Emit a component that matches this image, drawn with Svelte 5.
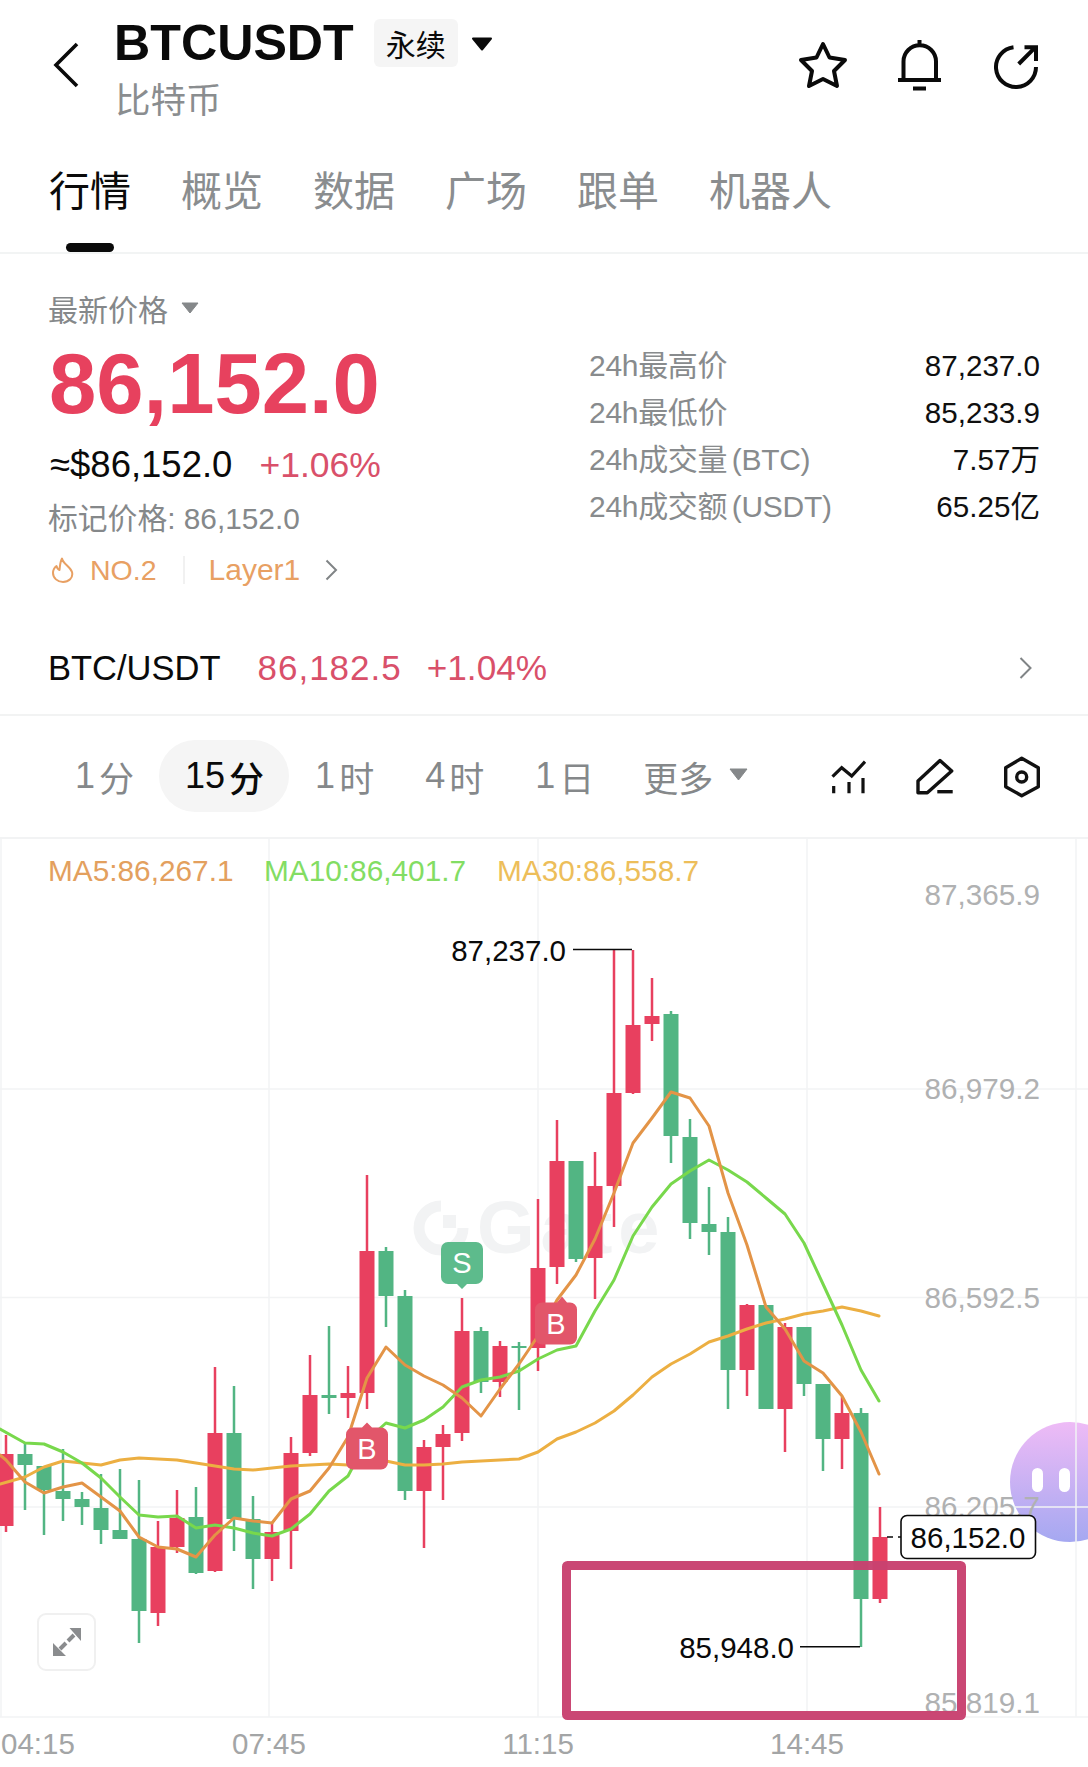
<script>
  const tabs = ["行情", "概览", "数据", "广场", "跟单", "机器人"];
  const stats = [
    ["24h最高价", "87,237.0"],
    ["24h最低价", "85,233.9"],
    ["24h成交量 (BTC)", "7.57万"],
    ["24h成交额 (USDT)", "65.25亿"],
  ];
  const intervals = [
    ["1", "分"],
    ["15", "分"],
    ["1", "时"],
    ["4", "时"],
    ["1", "日"],
  ];

  // bodyTop, bodyBottom, wickTop, wickBottom, colour; candles sit 19px apart
  const raw = [
    [1454, 1526, 1435, 1532, "r"],
    [1454, 1465, 1442, 1510, "g"],
    [1466, 1490, 1466, 1535, "g"],
    [1491, 1499, 1449, 1521, "g"],
    [1499, 1507, 1492, 1525, "g"],
    [1508, 1530, 1474, 1544, "g"],
    [1530, 1539, 1469, 1539, "g"],
    [1539, 1611, 1480, 1643, "g"],
    [1547, 1613, 1521, 1626, "r"],
    [1518, 1547, 1490, 1553, "r"],
    [1517, 1573, 1487, 1574, "g"],
    [1433, 1571, 1367, 1572, "r"],
    [1433, 1519, 1386, 1551, "g"],
    [1519, 1559, 1496, 1589, "g"],
    [1532, 1559, 1523, 1581, "r"],
    [1453, 1531, 1437, 1569, "r"],
    [1395, 1453, 1355, 1456, "r"],
    [1395, 1398, 1326, 1414, "g"],
    [1393, 1398, 1366, 1418, "r"],
    [1251, 1393, 1175, 1409, "r"],
    [1251, 1296, 1247, 1327, "g"],
    [1296, 1491, 1290, 1500, "g"],
    [1447, 1491, 1440, 1548, "r"],
    [1434, 1447, 1425, 1500, "r"],
    [1331, 1433, 1298, 1441, "r"],
    [1331, 1382, 1327, 1393, "g"],
    [1346, 1382, 1341, 1397, "r"],
    [1346, 1348, 1342, 1410, "g"],
    [1268, 1348, 1199, 1371, "r"],
    [1161, 1267, 1120, 1284, "r"],
    [1161, 1259, 1161, 1262, "g"],
    [1186, 1258, 1152, 1299, "r"],
    [1093, 1186, 950, 1227, "r"],
    [1025, 1093, 950, 1094, "r"],
    [1016, 1024, 978, 1041, "r"],
    [1014, 1136, 1011, 1163, "g"],
    [1137, 1223, 1119, 1239, "g"],
    [1224, 1232, 1187, 1255, "g"],
    [1232, 1370, 1217, 1409, "g"],
    [1305, 1370, 1304, 1396, "r"],
    [1305, 1409, 1305, 1409, "g"],
    [1327, 1409, 1323, 1452, "r"],
    [1327, 1384, 1327, 1396, "g"],
    [1384, 1439, 1384, 1471, "g"],
    [1413, 1439, 1397, 1469, "r"],
    [1413, 1599, 1408, 1647, "g"],
    [1537, 1599, 1507, 1603, "r"],
  ];
  const candles = raw.map((c, i) => ({
    x: 6 + 19 * i,
    top: c[0],
    bottom: c[1],
    high: c[2],
    low: c[3],
    color: c[4] === "r" ? "#e8405f" : "#52b583",
  }));

  const ma5 = [[0,1455],[6,1460],[25,1482],[44,1493],[63,1487],[82,1483],[101,1497],[120,1511],[139,1537],[158,1547],[177,1549],[196,1557],[215,1535],[234,1518],[253,1521],[272,1523],[291,1499],[310,1491],[329,1468],[348,1437],[367,1378],[386,1347],[405,1365],[424,1376],[443,1385],[462,1398],[481,1416],[500,1389],[519,1364],[538,1336],[557,1300],[576,1275],[595,1239],[614,1193],[633,1143],[652,1118],[671,1092],[690,1098],[709,1126],[728,1193],[747,1245],[766,1307],[785,1329],[804,1361],[823,1373],[842,1396],[861,1432],[879,1474]];
  const ma10 = [[0,1429],[25,1443],[44,1444],[63,1452],[82,1463],[101,1478],[120,1497],[139,1515],[158,1517],[177,1516],[196,1528],[215,1525],[234,1528],[253,1533],[272,1536],[291,1529],[310,1514],[329,1491],[348,1476],[367,1440],[386,1423],[405,1428],[424,1420],[443,1407],[462,1387],[481,1380],[500,1377],[519,1371],[538,1359],[557,1350],[576,1346],[595,1311],[614,1280],[633,1236],[652,1207],[671,1184],[690,1171],[709,1160],[728,1170],[747,1182],[766,1198],[785,1214],[804,1243],[823,1284],[842,1325],[861,1370],[879,1401]];
  const ma30 = [[0,1484],[25,1477],[44,1467],[63,1461],[82,1463],[101,1465],[120,1460],[139,1458],[158,1459],[177,1460],[196,1463],[215,1466],[234,1469],[253,1470],[272,1468],[291,1466],[310,1465],[329,1464],[348,1465],[367,1465],[386,1461],[405,1465],[424,1465],[443,1464],[462,1462],[481,1461],[500,1460],[519,1459],[538,1452],[557,1439],[576,1432],[595,1423],[614,1411],[633,1395],[652,1377],[671,1364],[690,1354],[709,1342],[728,1336],[747,1329],[766,1323],[785,1319],[804,1314],[823,1311],[842,1307],[861,1311],[879,1316]];
  const pts = (line) => line.map((p) => p.join(",")).join(" ");

  const gridY = [1089, 1297.5, 1507, 1717];
  const gridX = [1, 269, 538, 807, 1076];
  const yLabels = [
    ["87,365.9", 905],
    ["86,979.2", 1099],
    ["86,592.5", 1308],
    ["86,205.7", 1517],
    ["85,819.1", 1713],
  ];
  const xLabels = [
    ["07:45", 269],
    ["11:15", 538],
    ["14:45", 807],
  ];
</script>

<div class="page">
  <header class="head">
    <svg class="back" viewBox="0 0 26 46" width="26" height="46">
      <path d="M24 2 3 23l21 21" fill="none" stroke="#0a0a0a" stroke-width="3.6" />
    </svg>
    <div class="title-block">
      <div class="title-row">
        <span class="symbol">BTCUSDT</span>
        <span class="badge">永续</span>
        <svg class="title-caret" viewBox="0 0 22 14" width="22" height="14">
          <path d="M2 1.5h18L11 12.5z" fill="#0a0a0a" stroke="#0a0a0a" stroke-width="2" stroke-linejoin="round" />
        </svg>
      </div>
      <div class="coin">比特币</div>
    </div>
    <div class="head-icons">
      <svg viewBox="0 0 50 48" width="50" height="48" class="star">
        <path d="M25 3l6.5 13.5L47 19 36 30l3 15-14-7-14 7 3-15L3 19l15.500-2.500z" fill="none" stroke="#0a0a0a" stroke-width="4" stroke-linejoin="round" />
      </svg>
      <svg viewBox="0 0 43 51" width="43" height="51" class="bell">
        <g fill="none" stroke="#0a0a0a" stroke-width="4">
          <path d="M21.500 0v6M5.500 40V21.500a16.250 16.250 0 0 1 32.500 0V40M0 40h43M15 48.500h13" />
        </g>
      </svg>
      <svg viewBox="0 0 46 46" width="46" height="46" class="share">
        <g fill="none" stroke="#0a0a0a" stroke-width="4">
          <path d="M19.500 2.200A20 20 0 1 0 42 22M24.700 19 41 2.700M30.500 2.300H42V16" />
        </g>
      </svg>
    </div>
  </header>

  <nav class="tabs">
    {#each tabs as tab, i}
      <div class="tab" class:active={i === 0}>
        <span class="tab-text">{tab}</span>
        <span class="tab-bar"></span>
      </div>
    {/each}
  </nav>

  <section class="price-section">
    <div class="price-left">
      <div class="latest">
        最新价格
        <svg viewBox="0 0 18 12" width="18" height="12"><path d="M1 1h16L9 11z" fill="#85888a" stroke="#85888a" stroke-linejoin="round" /></svg>
      </div>
      <div class="big-price">86,152.0</div>
      <div class="approx">
        <span class="usd">≈$86,152.0</span>
        <span class="pct">+1.06%</span>
      </div>
      <div class="mark">标记价格: 86,152.0</div>
      <div class="rank">
        <svg viewBox="0 0 22 26" width="22" height="26">
          <path d="M10 1.500c1 5.500 8 7.500 10 13.500 1.500 6-3.500 10-9 10s-10-4-10-9c0-3 1.500-5.500 3.500-7 .5 2 1.500 3.500 3 4 .5-4 .5-8 2.500-11.500z" fill="none" stroke="#e8a063" stroke-width="2" stroke-linejoin="round" />
        </svg>
        <span class="rank-no">NO.2</span>
        <span class="rank-div"></span>
        <span class="rank-tag">Layer1</span>
        <svg viewBox="0 0 13 22" width="13" height="22">
          <path d="M1.500 1.500 11 11l-9.500 9.500" fill="none" stroke="#808486" stroke-width="2" />
        </svg>
      </div>
    </div>
    <div class="stats">
      {#each stats as row}
        <div class="stat-row">
          <span class="stat-k">{row[0]}</span>
          <span class="stat-v">{row[1]}</span>
        </div>
      {/each}
    </div>
  </section>

  <section class="spot-row">
    <span class="spot-name">BTC/USDT</span>
    <span class="spot-price">86,182.5</span>
    <span class="spot-pct">+1.04%</span>
    <svg viewBox="0 0 13 22" width="13" height="22" class="spot-more">
      <path d="M1.500 1 11.500 11l-10 10" fill="none" stroke="#808486" stroke-width="2" />
    </svg>
  </section>

  <section class="interval-row">
    {#each intervals as item, i}
      <div class="interval" class:current={i === 1}>
        <span class="interval-num">{item[0]}</span>{item[1]}
      </div>
    {/each}
    <div class="interval more">
      更多
      <svg viewBox="0 0 19 13" width="19" height="13"><path d="M1 1h17L9.500 12z" fill="#85888a" stroke="#85888a" stroke-linejoin="round" /></svg>
    </div>
    <div class="tools">
      <svg viewBox="0 0 36 36" width="36" height="36">
        <g fill="none" stroke="#111" stroke-width="3.200">
          <path d="M1.500 17.700 10.700 8.700l10 8.300L34 2.700" />
          <path d="M2.700 27v7.300M18 23v11.300M32 19v15.300" />
        </g>
      </svg>
      <svg viewBox="0 0 38 38" width="38" height="38">
        <g fill="none" stroke="#111" stroke-width="3.400" stroke-linejoin="round">
          <path d="M2 34.700V23L24 2.500 35.700 13 11.300 34.700z" />
          <path d="M21.300 33.700h15.400" />
        </g>
      </svg>
      <svg viewBox="0 0 38 42" width="38" height="42">
        <g fill="none" stroke="#111" stroke-width="3.400" stroke-linejoin="round">
          <path d="M18.700 2.300 35.300 11.700V30.700L18.700 39.700 2.700 30.700V11.700z" />
          <circle cx="18.700" cy="21" r="5" />
        </g>
      </svg>
    </div>
  </section>

  <section class="chart">
    <div class="bot">
      <span class="bot-eye"></span>
      <span class="bot-eye"></span>
    </div>
    <svg class="chart-svg" viewBox="0 839 1088 928" width="1088" height="928">
      <g stroke="#f2f3f4" stroke-width="1.500">
        {#each gridY as y}<line x1="0" x2="1088" y1={y} y2={y} />{/each}
        {#each gridX as x}<line x1={x} x2={x} y1="839" y2="1717" />{/each}
      </g>

      <g fill="#f2f3f4">
        <path d="M441 1206a22 22 0 1 0 22 22" fill="none" stroke="#f2f3f4" stroke-width="11" />
        <rect x="443" y="1215" width="13" height="13" />
        <text class="watermark" x="477" y="1253">Gate</text>
      </g>

      <text class="legend" x="48" y="881" fill="#e3a05e">MA5:86,267.1</text>
      <text class="legend" x="264" y="881" fill="#83dd63">MA10:86,401.7</text>
      <text class="legend" x="497" y="881" fill="#edbe5a">MA30:86,558.7</text>

      {#each candles as c}
        <rect x={c.x - 1.25} y={c.high} width="2.500" height={c.low - c.high} fill={c.color} />
        <rect x={c.x - 7.5} y={c.top} width="15" height={c.bottom - c.top} fill={c.color} />
      {/each}

      <g fill="none" stroke-width="3" stroke-linejoin="round" stroke-linecap="round">
        <polyline points={pts(ma30)} stroke="#ecaf42" />
        <polyline points={pts(ma10)} stroke="#78d84c" />
        <polyline points={pts(ma5)} stroke="#e39447" />
      </g>

      <path d="M441 1249a7 7 0 0 1 7-7h28a7 7 0 0 1 7 7v28a7 7 0 0 1-7 7h-9l-5 5-5-5h-9a7 7 0 0 1-7-7z" fill="#5dbb8c" />
      <text class="marker" x="462" y="1273">S</text>
      <path d="M535 1309.500a7 7 0 0 1 7-7h15l5-6 5 6h3a7 7 0 0 1 7 7v28a7 7 0 0 1-7 7h-28a7 7 0 0 1-7-7z" fill="#e2566a" />
      <text class="marker" x="556" y="1334">B</text>
      <path d="M346 1434.500a7 7 0 0 1 7-7h9l5-5 5 5h9a7 7 0 0 1 7 7v28a7 7 0 0 1-7 7h-28a7 7 0 0 1-7-7z" fill="#e2566a" />
      <text class="marker" x="367" y="1459">B</text>

      <g fill="none" stroke="#0a0a0a" stroke-width="1.600">
        <path d="M573 949.500h59" />
        <path d="M800 1646.700h60" />
      </g>
      <text class="extreme" x="566" y="961">87,237.0</text>
      <text class="extreme" x="794" y="1658">85,948.0</text>

      {#each yLabels as label}
        <text class="y-label" x="1040" y={label[1]}>{label[0]}</text>
      {/each}
      <text class="x-label" x="1" y="1754">04:15</text>
      {#each xLabels as label}
        <text class="x-label mid" x={label[1]} y="1754">{label[0]}</text>
      {/each}

      <path d="M887 1537h6M898 1537h3" stroke="#0a0a0a" stroke-width="1.600" />
      <rect x="901" y="1515.500" width="134.500" height="43" rx="6" fill="#fff" stroke="#0a0a0a" stroke-width="1.600" />
      <text class="last-price" x="968" y="1548">86,152.0</text>

      <rect class="note-box" x="566.500" y="1565.500" width="395" height="150" rx="1" />
    </svg>
    <div class="expand">
      <svg viewBox="0 0 28 28" width="28" height="28">
        <path d="M28 0H16.500L28 13zM0 28V15l13 13z" fill="#8a8c8e" />
        <path d="M21 7l-6 6M7 21l6-6" stroke="#8a8c8e" stroke-width="4" />
      </svg>
    </div>
  </section>
</div>

<style>
  :global(body) {
    margin: 0;
    background: #fff;
  }

  .page {
    width: 1088px;
    height: 1767px;
    overflow: hidden;
    position: relative;
    background: #fff;
    color: #0a0a0a;
    font-family: "Liberation Sans", "Noto Sans CJK SC", sans-serif;
  }

  .head {
    display: flex;
    height: 107px;
    padding: 19px 48px 0 53px;
    align-items: flex-start;
  }

  .back {
    margin-top: 23px;
    margin-right: 35px;
    flex: none;
  }

  .title-row {
    display: flex;
    align-items: center;
    height: 48px;
  }

  .symbol {
    font-size: 50.200px;
    font-weight: 700;
    line-height: 50px;
  }

  .badge {
    margin-left: 20px;
    width: 84px;
    height: 48px;
    display: flex;
    align-items: center;
    justify-content: center;
    background: #f5f5f5;
    border-radius: 6px;
    font-size: 30px;
  }

  .title-caret {
    margin-left: 13px;
    margin-top: 2px;
  }

  .coin {
    margin-top: 14px;
    margin-left: 1px;
    font-size: 35.500px;
    line-height: 40px;
    color: #8a8d8f;
  }

  .head-icons {
    margin-left: auto;
    display: flex;
    align-items: flex-start;
  }

  .star {
    margin-top: 22px;
  }

  .bell {
    margin-top: 21px;
    margin-left: 50px;
  }

  .share {
    margin-top: 26px;
    margin-left: 53px;
  }

  .tabs {
    display: flex;
    gap: 50px;
    padding: 38px 0 0 49px;
    height: 88px;
    border-bottom: 2px solid #f2f4f4;
  }

  .tab {
    display: flex;
    flex-direction: column;
    align-items: center;
    color: #8a8d8f;
    font-size: 41px;
  }

  .tab-text {
    line-height: 56px;
  }

  .tab-bar {
    width: 48px;
    height: 9px;
    margin-top: 23px;
    border-radius: 5px;
  }

  .tab.active {
    color: #0a0a0a;
  }

  .tab.active .tab-bar {
    background: #0a0a0a;
  }

  .price-section {
    display: flex;
    justify-content: space-between;
    padding: 0 48px;
    height: 336px;
  }

  .price-left {
    padding-top: 34px;
  }

  .latest {
    display: flex;
    align-items: center;
    gap: 13px;
    height: 40px;
    font-size: 30px;
    color: #85888a;
  }

  .big-price {
    margin: 14px 0 0 1px;
    font-size: 85px;
    font-weight: 700;
    line-height: 84px;
    color: #e7415e;
  }

  .approx {
    display: flex;
    gap: 27px;
    margin: 19px 0 0 2px;
    height: 40px;
    line-height: 40px;
  }

  .usd {
    font-size: 36.500px;
  }

  .pct {
    font-size: 35.500px;
    color: #d9506a;
  }

  .mark {
    margin-top: 14px;
    height: 40px;
    line-height: 40px;
    font-size: 29.800px;
    color: #85888a;
  }

  .rank {
    display: flex;
    align-items: center;
    height: 40px;
    margin-top: 11px;
    padding-left: 4px;
    font-size: 28.500px;
    color: #e8a063;
  }

  .rank-no {
    margin-left: 16px;
  }

  .rank-div {
    width: 2px;
    height: 28px;
    margin: 0 24px 0 26px;
    background: #f1f1f1;
  }

  .rank-tag {
    font-size: 30px;
  }

  .rank svg:last-child {
    margin-left: 25px;
  }

  .stats {
    width: 451px;
    padding-top: 88px;
  }

  .stat-row {
    display: flex;
    justify-content: space-between;
    height: 47px;
    line-height: 47px;
    font-size: 29.600px;
    white-space: nowrap;
  }

  .stat-k {
    font-size: 30px;
    word-spacing: -3.500px;
    letter-spacing: -0.3px;
    color: #888b8d;
  }

  .stat-v {
    color: #0f0f0f;
  }

  .spot-row {
    display: flex;
    align-items: center;
    height: 56px;
    padding: 50px 0 18px 48px;
    border-bottom: 2px solid #f2f3f3;
    font-size: 34.500px;
  }

  .spot-price {
    margin-left: 37px;
    font-size: 35px;
    letter-spacing: 1px;
    color: #d9506a;
  }

  .spot-pct {
    margin-left: 25px;
    font-size: 35.200px;
    color: #d9506a;
  }

  .spot-more {
    margin-left: auto;
    margin-right: 56px;
  }

  .interval-row {
    display: flex;
    align-items: center;
    height: 72px;
    padding: 24px 0 25px 49px;
    border-bottom: 2px solid #f2f3f4;
    font-size: 35px;
    color: #85888a;
  }

  .interval {
    display: flex;
    align-items: center;
    height: 72px;
    padding: 0 25px 0 26px;
    border-radius: 36px;
    white-space: nowrap;
  }

  .interval-num {
    margin-right: 4px;
    font-size: 36px;
  }

  .interval.current {
    background: #f5f5f5;
    color: #0a0a0a;
    font-weight: 500;
  }

  .interval.more {
    padding-left: 24px;
  }

  .interval.more svg {
    margin-left: 16px;
    margin-top: -4px;
  }

  .tools {
    margin-left: auto;
    margin-top: 2px;
    padding-right: 47px;
    display: flex;
    align-items: center;
    gap: 49px;
  }

  .chart {
    position: relative;
    height: 928px;
  }

  .chart-svg {
    position: relative;
    display: block;
  }

  .chart-svg text {
    font-family: "Liberation Sans", sans-serif;
  }

  .watermark {
    font-size: 74px;
    font-weight: 700;
    letter-spacing: 6px;
  }

  .legend {
    font-size: 29.800px;
  }

  .marker {
    font-size: 29px;
    fill: #fff;
    text-anchor: middle;
  }

  .extreme {
    font-size: 29.500px;
    fill: #0a0a0a;
    text-anchor: end;
  }

  .y-label {
    font-size: 29.700px;
    fill: #b0b1b2;
    text-anchor: end;
  }

  .x-label {
    font-size: 29.500px;
    fill: #a3a5a6;
  }

  .x-label.mid {
    text-anchor: middle;
  }

  .last-price {
    font-size: 29.500px;
    fill: #0a0a0a;
    text-anchor: middle;
  }

  .note-box {
    fill: none;
    stroke: #c8416f;
    stroke-width: 9;
    stroke-opacity: 0.97;
  }

  .bot {
    position: absolute;
    left: 1010px;
    top: 583px;
    width: 120px;
    height: 120px;
    border-radius: 50%;
    background: linear-gradient(180deg, #eebbf6, #a5a8f1);
  }

  .bot-eye {
    position: absolute;
    top: 46px;
    width: 11px;
    height: 24px;
    border-radius: 6px;
    background: #fff;
  }

  .bot-eye:first-child {
    left: 22px;
  }

  .bot-eye:last-child {
    left: 49px;
  }

  .expand {
    position: absolute;
    left: 37px;
    top: 774px;
    width: 55px;
    height: 54px;
    border: 2px solid #f0f0f0;
    border-radius: 9px;
    display: flex;
    align-items: center;
    justify-content: center;
    background: #fff;
  }

  .expand svg {
    display: block;
  }
</style>
